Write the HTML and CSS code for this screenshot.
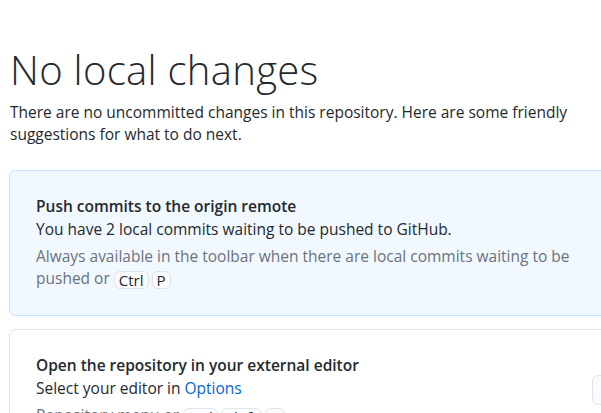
FILE: index.html
```html
<!DOCTYPE html>
<html lang="en">
<head>
<meta charset="utf-8">
<title>No local changes</title>
<link rel="stylesheet" href="styles.css">
</head>
<body>
<main class="page">
  <h1 class="title">No local changes</h1>
  <p class="lead">There are no uncommitted changes in this repository. Here are some friendly suggestions for what to do next.</p>
  <div class="actions">
    <section class="card card-primary">
      <div class="card-text">
        <h2 class="card-title">Push commits to the origin remote</h2>
        <p class="card-desc">You have 2 local commits waiting to be pushed to GitHub.</p>
        <p class="card-hint">Always available in the toolbar when there are local commits waiting to be pushed or <kbd class="key">Ctrl</kbd><kbd class="key">P</kbd></p>
      </div>
      <button class="btn" type="button">Push origin</button>
    </section>
    <section class="card">
      <div class="card-text">
        <h2 class="card-title">Open the repository in your external editor</h2>
        <p class="card-desc">Select your editor in <a class="link" href="#">Options</a></p>
        <p class="card-hint">Repository menu or <kbd class="key">Ctrl</kbd><kbd class="key">Shift</kbd><kbd class="key">A</kbd></p>
      </div>
      <button class="btn" type="button">Open in Visual Studio Code</button>
    </section>
  </div>
</main>
</body>
</html>
```
FILE: styles.css
```css
html, body {
  margin: 0;
  padding: 0;
  background: #ffffff;
  overflow: hidden;
}
body {
  width: 601px;
  height: 413px;
  font-family: "Open Sans", "Noto Sans", sans-serif;
  color: #24292e;
}
.page {
  width: 900px;
  padding: 46px 0 0 10px;
}
.title {
  margin: 0;
  font-size: 40px;
  font-weight: 300;
  line-height: 48px;
  letter-spacing: 0.3px;
  color: #24292e;
}
.lead {
  margin: 7px 0 0 0;
  width: 580px;
  font-size: 15.5px;
  line-height: 22px;
}
.actions {
  margin: 25px 0 0 -1px;
  display: flex;
  flex-direction: column;
  gap: 13px;
}
.card {
  width: 808px;
  box-sizing: border-box;
  display: flex;
  align-items: center;
  padding: 24px 26px 26px 26px;
  border: 1px solid #e1e4e8;
  border-radius: 6px;
  background: #ffffff;
}
.card-primary {
  background: #f1f8ff;
  border-color: #c8e1ff;
}
.card-text {
  width: 552px;
  flex: none;
}
.card-title {
  margin: 0;
  font-size: 15.5px;
  font-weight: 600;
  line-height: 22px;
}
.card-desc {
  margin: 1px 0 0 0;
  font-size: 15.5px;
  line-height: 22px;
}
.card-hint {
  margin: 5px 0 0 0;
  font-size: 15.5px;
  line-height: 22px;
  color: #6a737d;
}
.link {
  color: #0366d6;
  text-decoration: none;
}
.key {
  display: inline-block;
  font-family: inherit;
  font-size: 15px;
  line-height: 16px;
  padding: 0 4px;
  margin-right: 3px;
  border: 1px solid #e1e4e8;
  border-radius: 6px;
  background: #fafbfc;
  color: #24292e;
  vertical-align: -2px;
}
.btn {
  margin-left: auto;
  height: 30px;
  padding: 0 10px;
  font-family: inherit;
  font-size: 14px;
  color: #24292e;
  background: #fafbfc;
  border: 1px solid #e1e4e8;
  border-radius: 6px;
  white-space: nowrap;
}
```
